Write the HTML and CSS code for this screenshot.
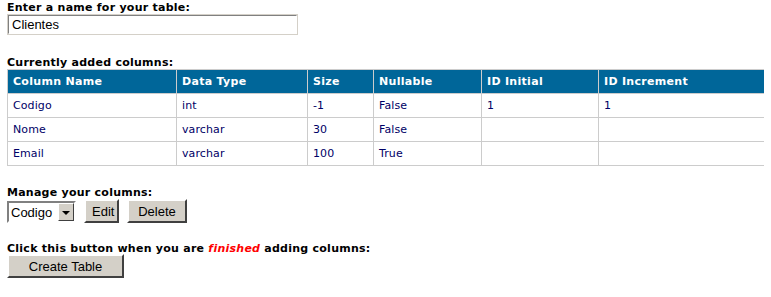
FILE: index.html
```html
<!DOCTYPE html>
<html lang="en">
<head>
    <meta charset="UTF-8">
    <title>Create Table</title>
    <link rel="stylesheet" href="styles.css">
</head>
<body>
    <div class="field field-name">
        <label class="caption" for="tableName">Enter a name for your table:</label>
        <input type="text" id="tableName" class="text-box" value="Clientes">
    </div>

    <div class="field field-table">
        <div class="caption">Currently added columns:</div>
        <table class="columns">
            <tr>
                <th class="c1">Column Name</th>
                <th class="c2">Data Type</th>
                <th class="c3">Size</th>
                <th class="c4">Nullable</th>
                <th class="c5">ID Initial</th>
                <th class="c6">ID Increment</th>
            </tr>
            <tr>
                <td>Codigo</td><td>int</td><td>-1</td><td>False</td><td>1</td><td>1</td>
            </tr>
            <tr>
                <td>Nome</td><td>varchar</td><td>30</td><td>False</td><td></td><td></td>
            </tr>
            <tr>
                <td>Email</td><td>varchar</td><td>100</td><td>True</td><td></td><td></td>
            </tr>
        </table>
    </div>

    <div class="field">
        <div class="caption">Manage your columns:</div>
        <div class="manage">
            <div class="select-box">
                <span class="select-value">Codigo</span>
                <span class="select-arrow"></span>
            </div>
            <button class="win-btn btn-edit">Edit</button>
            <button class="win-btn btn-delete">Delete</button>
        </div>
    </div>

    <div class="field">
        <div class="caption">Click this button when you are <em class="finished">finished</em> adding columns:</div>
        <button class="win-btn btn-create">Create Table</button>
    </div>
</body>
</html>
```

FILE: styles.css
```css
body {
    margin: 2px 7px;
    font-family: "DejaVu Sans", Verdana, sans-serif;
    font-size: 11px;
    color: #000;
    background: #fff;
}

.field {
    margin-bottom: 20px;
}

.field-name {
    margin-bottom: 22px;
}

.field-table {
    margin-bottom: 21px;
}

.caption {
    display: block;
    font-weight: bold;
    font-size: 11px;
    line-height: 12px;
    height: 12px;
    letter-spacing: 0.25px;
}

.finished {
    color: #f00;
    font-style: italic;
}

.text-box {
    display: block;
    box-sizing: border-box;
    width: 291px;
    height: 21px;
    margin: 0;
    padding: 1px 3px;
    font-family: "Liberation Sans", Arial, sans-serif;
    font-size: 13px;
    border: 2px solid;
    border-color: #808080 #fff #fff #808080;
    outline: 1px solid #d4d0c8;
    outline-offset: -1px;
}

.columns {
    border-collapse: collapse;
    width: 761px;
}

.columns th,
.columns td {
    border: 1px solid #ccc;
    height: 23px;
    padding: 0 0 0 5px;
    text-align: left;
    font-size: 11px;
}

.columns th {
    background: #006699;
    color: #fff;
    font-weight: bold;
    letter-spacing: 0.3px;
}

.columns td {
    color: #000066;
    letter-spacing: 0.1px;
}

.c1 { width: 163px; }
.c2 { width: 125px; }
.c3 { width: 60px; }
.c4 { width: 102px; }
.c5 { width: 111px; }

.manage {
    display: flex;
    align-items: center;
    gap: 8px;
}

.select-box {
    display: flex;
    box-sizing: border-box;
    width: 69px;
    height: 22px;
    margin-top: 2px;
    border: 2px solid;
    border-color: #808080 #fff #fff #808080;
    background: #fff;
    font-family: "Liberation Sans", Arial, sans-serif;
    font-size: 13px;
}

.select-value {
    flex: 1;
    padding: 2px 0 0 2px;
}

.select-arrow {
    position: relative;
    width: 16px;
    background: #d4d0c8;
    box-sizing: border-box;
    border: 1px solid;
    border-color: #fff #404040 #404040 #fff;
}

.select-arrow::after {
    content: "";
    position: absolute;
    left: 3px;
    top: 7px;
    border-left: 4px solid transparent;
    border-right: 4px solid transparent;
    border-top: 4px solid #000;
}

.win-btn {
    box-sizing: border-box;
    height: 24px;
    margin: 0;
    padding: 0 6px;
    font-family: "Liberation Sans", Arial, sans-serif;
    font-size: 13px;
    color: #000;
    background: #d4d0c8;
    border: 2px solid;
    border-color: #fff #404040 #404040 #fff;
    border-radius: 0;
}

.btn-edit { width: 35px; }
.btn-delete { width: 60px; }

.btn-create {
    display: block;
    width: 117px;
    margin-top: -1px;
}
```
